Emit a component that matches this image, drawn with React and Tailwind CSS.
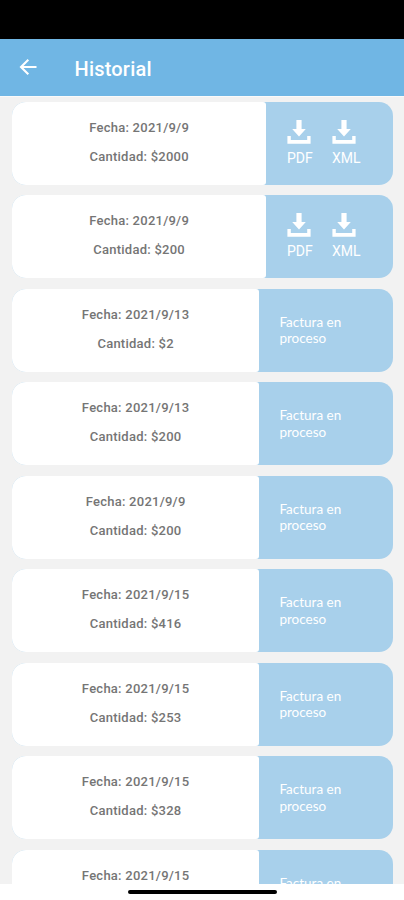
import React from 'react';

const invoices = [
  { date: '2021/9/9', amount: '$2000', ready: true },
  { date: '2021/9/9', amount: '$200', ready: true },
  { date: '2021/9/13', amount: '$2' },
  { date: '2021/9/13', amount: '$200' },
  { date: '2021/9/9', amount: '$200' },
  { date: '2021/9/15', amount: '$416' },
  { date: '2021/9/15', amount: '$253' },
  { date: '2021/9/15', amount: '$328' },
  { date: '2021/9/15' },
];

const BackArrow = () => (
  <svg viewBox="0 0 18 18" className="w-[18px] h-[18px]" fill="none" stroke="#fff" strokeWidth="2.1">
    <path d="M17.5 9H2.2M9.3 1.7 2 9 9.3 16.3" />
  </svg>
);

const DownloadIcon = () => (
  <svg viewBox="0 0 24 24" className="w-6 h-6" fill="#fff">
    <path d="M9.4 0h5.2v9h4.2L12 16.6 5.2 9h4.2z" />
    <path d="M.4 16h3.4v4h16.4v-4h3.4v7.8H.4z" />
  </svg>
);

const Download = ({ label }) => (
  <div className="w-[45px] flex flex-col items-start">
    <DownloadIcon />
    <span className="mt-[6px] text-[14px] leading-4 text-white">{label}</span>
  </div>
);

const InvoiceCard = ({ date, amount, ready }) => (
  <div className="flex h-[83px] shrink-0 rounded-[14px] overflow-hidden bg-[#a8d0eb]">
    <div className={`${ready ? 'w-[253.5px]' : 'w-[246.5px]'} shrink-0 rounded-r-[3px] bg-white pt-4 text-center text-[13px] font-medium leading-5 tracking-[0.25px] text-[#757575]`}>
      <p>Fecha: {date}</p>
      {amount && <p className="mt-[9px]">Cantidad: {amount}</p>}
    </div>
    {ready ? (
      <div className="flex pl-[21px] pt-[18px]">
        <Download label="PDF" />
        <Download label="XML" />
      </div>
    ) : (
      <p className="pl-[20.5px] pt-[25px] w-24 text-[13.5px] leading-[16.5px] text-white font-['Lato',sans-serif]">
        Factura en proceso
      </p>
    )}
  </div>
);

const App = () => (
  <div className="h-[900px] w-full flex flex-col overflow-hidden bg-white font-['Roboto',sans-serif]">
    <div className="h-[38.5px] shrink-0 bg-black" />
    <header className="h-[57.5px] shrink-0 flex items-center bg-[#70b6e4] pl-[19px]">
      <BackArrow />
      <h1 className="ml-[37.5px] pt-[3px] text-[20px] leading-6 font-medium tracking-[0.2px] text-white">Historial</h1>
    </header>

    <main className="h-[788px] shrink-0 overflow-hidden bg-[#f2f2f2] border-t border-[#fafafa] flex flex-col gap-[10.5px] pt-[4.8px] pl-[12.4px] pr-[11.5px]">
      {invoices.map((invoice, i) => <InvoiceCard key={i} {...invoice} />)}
    </main>

    {/* Gesture bar */}
    <div className="flex justify-center pt-1.5">
      <div className="w-[149px] h-1 rounded-full bg-black" />
    </div>
  </div>
);

export default App;
